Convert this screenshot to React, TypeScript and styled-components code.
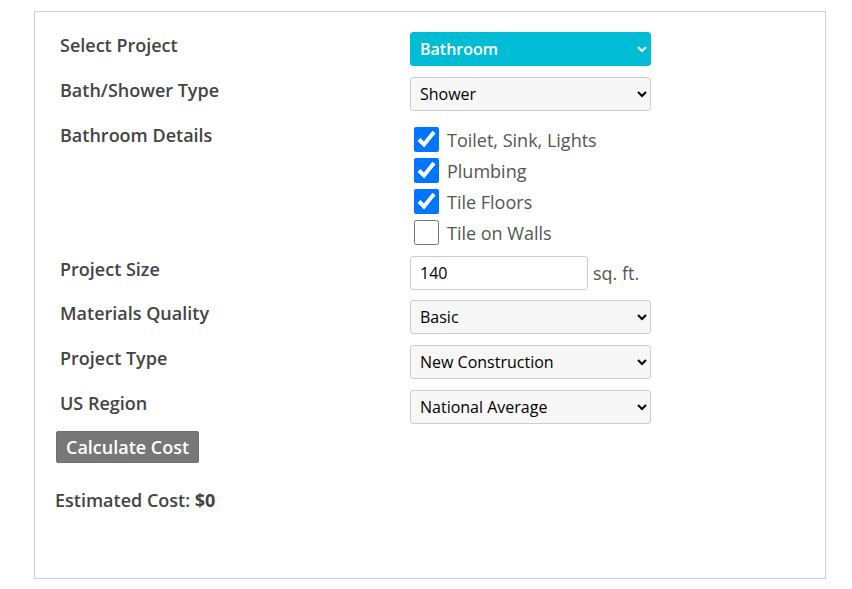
import React from "react";
import styled, { createGlobalStyle } from "styled-components";

const Global = createGlobalStyle`
  html, body { margin: 0; padding: 0; background: #fff; }
  body { font-family: "Open Sans", "Liberation Sans", sans-serif; }
`;

const Frame = styled.div`
  box-sizing: border-box;
  width: 792px;
  height: 568px;
  margin: 11px 0 0 34px;
  border: 1px solid #cfcfcf;
  padding: 20px 25px 0 25px;
`;

const Row = styled.div<{ $gap?: number }>`
  display: flex;
  align-items: flex-start;
  margin-bottom: ${(p) => (p.$gap ?? 11)}px;
`;

const Label = styled.div`
  width: 350px;
  flex: none;
  font-size: 18px;
  font-weight: 600;
  color: #444;
  line-height: 26px;
`;

const Select = styled.select<{ $accent?: boolean }>`
  box-sizing: border-box;
  width: 241px;
  height: 34px;
  padding: 0 5px;
  font-family: "Open Sans", "Liberation Sans", sans-serif;
  font-size: 16px;
  font-weight: ${(p) => (p.$accent ? 600 : 500)};
  color: ${(p) => (p.$accent ? "#fff" : "#000")};
  background: ${(p) => (p.$accent ? "#00bcd4" : "#f7f7f7")};
  border: 1px solid ${(p) => (p.$accent ? "#00bcd4" : "#cccccc")};
  border-radius: 3px;
  outline: none;
`;

const Checks = styled.div`
  display: flex;
  flex-direction: column;
  padding-top: 2px;
`;

const CheckRow = styled.label`
  display: flex;
  align-items: center;
  gap: 8px;
  height: 31px;
  padding-left: 4px;
  font-size: 18px;
  color: #555;
`;

const Box = styled.input`
  width: 25px;
  height: 25px;
  margin: 0;
  flex: none;
`;

const SizeWrap = styled.div`
  display: flex;
  align-items: center;
  gap: 5px;
  font-size: 18px;
  color: #555;
`;

const SizeInput = styled.input`
  box-sizing: border-box;
  width: 178px;
  height: 34px;
  padding: 0 9px;
  font-family: "Open Sans", "Liberation Sans", sans-serif;
  font-size: 16px;
  font-weight: 500;
  color: #000;
  background: #fff;
  border: 1px solid #cccccc;
  border-radius: 3px;
  outline: none;
`;

const Button = styled.button`
  margin-left: -4px;
  height: 32px;
  padding: 0 9px;
  font-family: "Open Sans", "Liberation Sans", sans-serif;
  font-size: 18px;
  font-weight: 600;
  color: #fff;
  background: #777;
  border: 1px solid #6f6f6f;
  border-radius: 2px;
`;

const Result = styled.div`
  margin: 25px 0 0 -5px;
  font-size: 18px;
  font-weight: 600;
  color: #444;
  b { font-weight: 700; }
`;

const details = [
  { name: "Toilet, Sink, Lights", on: true },
  { name: "Plumbing", on: true },
  { name: "Tile Floors", on: true },
  { name: "Tile on Walls", on: false },
];

export default function App() {
  return (
    <>
      <Global />
      <Frame>
        <Row>
          <Label>Select Project</Label>
          <Select $accent defaultValue="Bathroom">
            <option>Bathroom</option>
            <option>Kitchen</option>
          </Select>
        </Row>
        <Row>
          <Label>Bath/Shower Type</Label>
          <Select defaultValue="Shower">
            <option>Shower</option>
            <option>Bath</option>
          </Select>
        </Row>
        <Row $gap={8}>
          <Label>Bathroom Details</Label>
          <Checks>
            {details.map((d) => (
              <CheckRow key={d.name}>
                <Box type="checkbox" defaultChecked={d.on} />
                {d.name}
              </CheckRow>
            ))}
          </Checks>
        </Row>
        <Row $gap={10}>
          <Label>Project Size</Label>
          <SizeWrap>
            <SizeInput defaultValue="140" />
            sq. ft.
          </SizeWrap>
        </Row>
        <Row>
          <Label>Materials Quality</Label>
          <Select defaultValue="Basic">
            <option>Basic</option>
          </Select>
        </Row>
        <Row>
          <Label>Project Type</Label>
          <Select defaultValue="New Construction">
            <option>New Construction</option>
          </Select>
        </Row>
        <Row $gap={7}>
          <Label>US Region</Label>
          <Select defaultValue="National Average">
            <option>National Average</option>
          </Select>
        </Row>
        <Button>Calculate Cost</Button>
        <Result>
          Estimated Cost: <b>$0</b>
        </Result>
      </Frame>
    </>
  );
}
